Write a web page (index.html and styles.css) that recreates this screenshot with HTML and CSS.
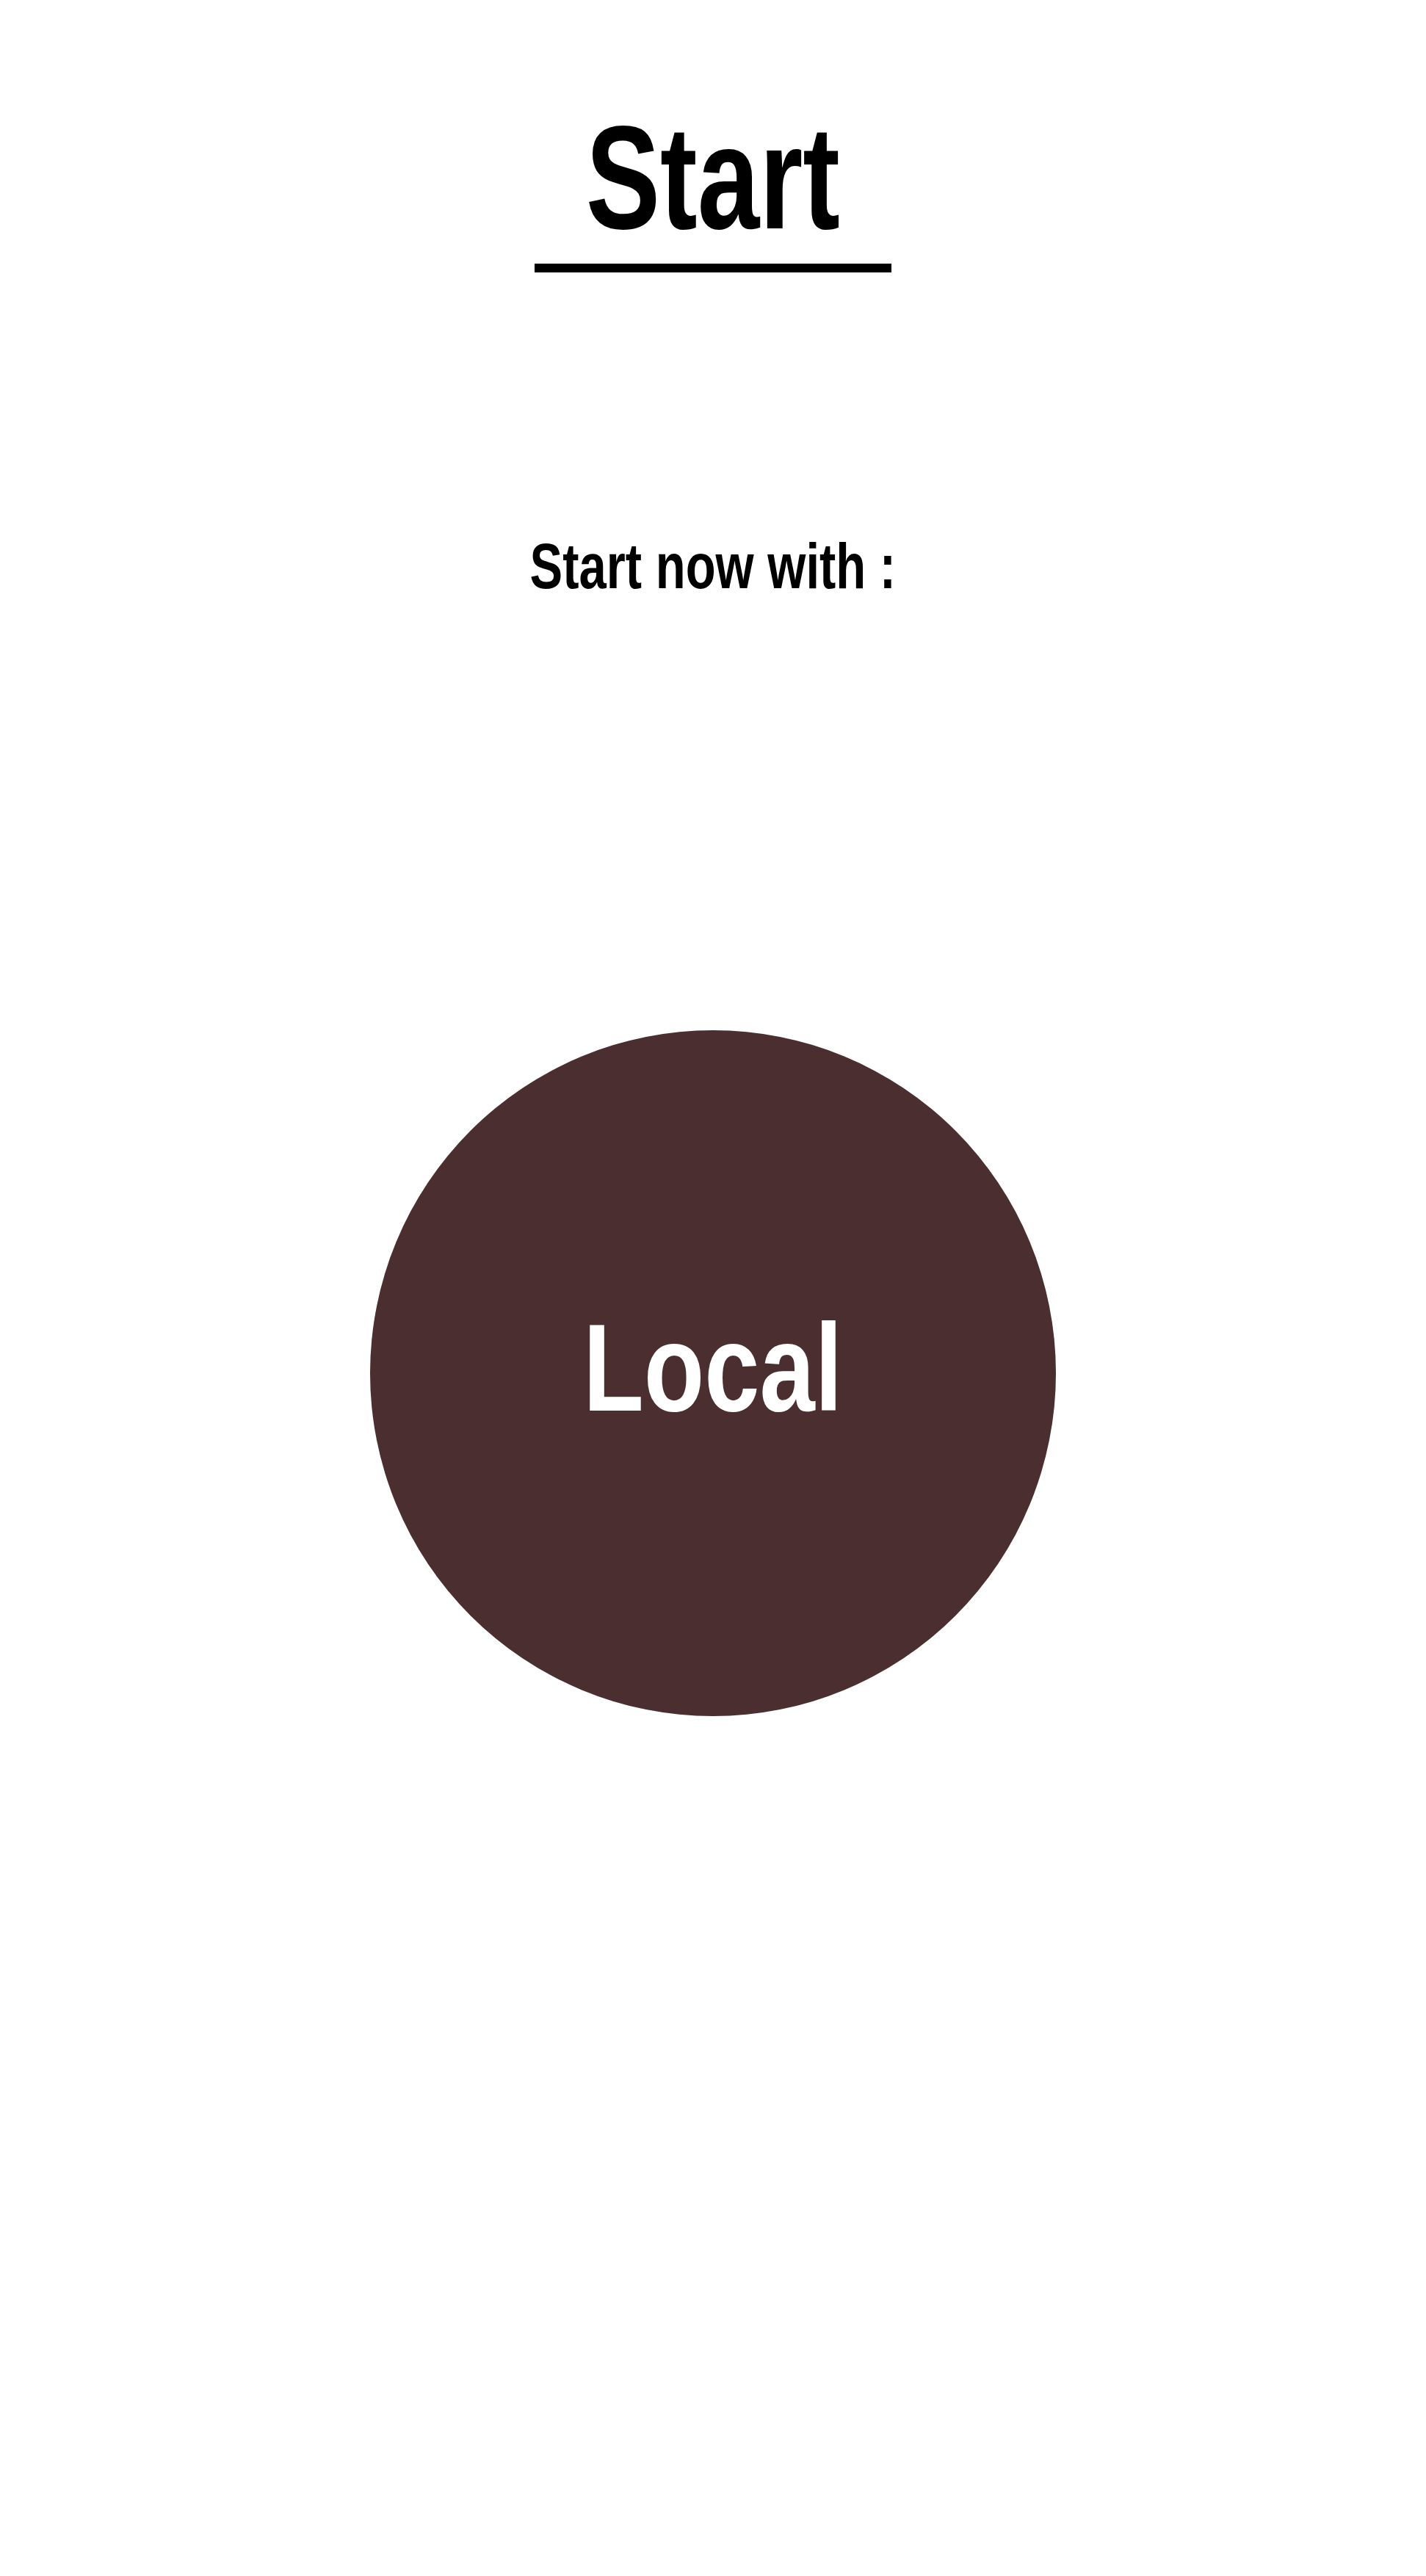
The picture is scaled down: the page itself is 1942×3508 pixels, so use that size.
FILE: index.html
```html
<!DOCTYPE html>
<html lang="en">
<head>
<meta charset="utf-8">
<title>Start</title>
<link rel="stylesheet" href="styles.css">
</head>
<body>
<main class="page">
  <h1 class="title"><span class="narrow narrow-title">Start</span></h1>
  <p class="subtitle"><span class="narrow narrow-sub">Start now with :</span></p>
  <button class="circle" type="button"><span class="narrow narrow-local">Local</span></button>
</main>
</body>
</html>
```
FILE: styles.css
```css
html, body {
  margin: 0;
  padding: 0;
  background: #ffffff;
}
.page {
  display: flex;
  flex-direction: column;
  align-items: center;
  font-family: "Liberation Sans", Arial, sans-serif;
  color: #000;
}
.narrow {
  display: inline-block;
  white-space: nowrap;
  transform-origin: center;
}
.narrow-title { transform: scaleX(0.76); }
.narrow-sub { transform: scaleX(0.77); }
.narrow-local { transform: scaleX(0.8); }
.title {
  margin: 142px 0 0;
  width: 486px;
  font-size: 200px;
  line-height: 1;
  font-weight: bold;
  text-align: center;
  padding-bottom: 17px;
  border-bottom: 12px solid #000;
}
.subtitle {
  margin: 356px 0 0;
  font-size: 87px;
  line-height: 1;
  font-weight: bold;
}
.circle {
  margin-top: 589px;
  width: 934px;
  height: 934px;
  border-radius: 50%;
  border: none;
  padding: 0 0 16px;
  background: #4b2e30;
  display: flex;
  align-items: center;
  justify-content: center;
  font-family: inherit;
  color: #fff;
  font-size: 169px;
  line-height: 1;
  font-weight: bold;
}
```
